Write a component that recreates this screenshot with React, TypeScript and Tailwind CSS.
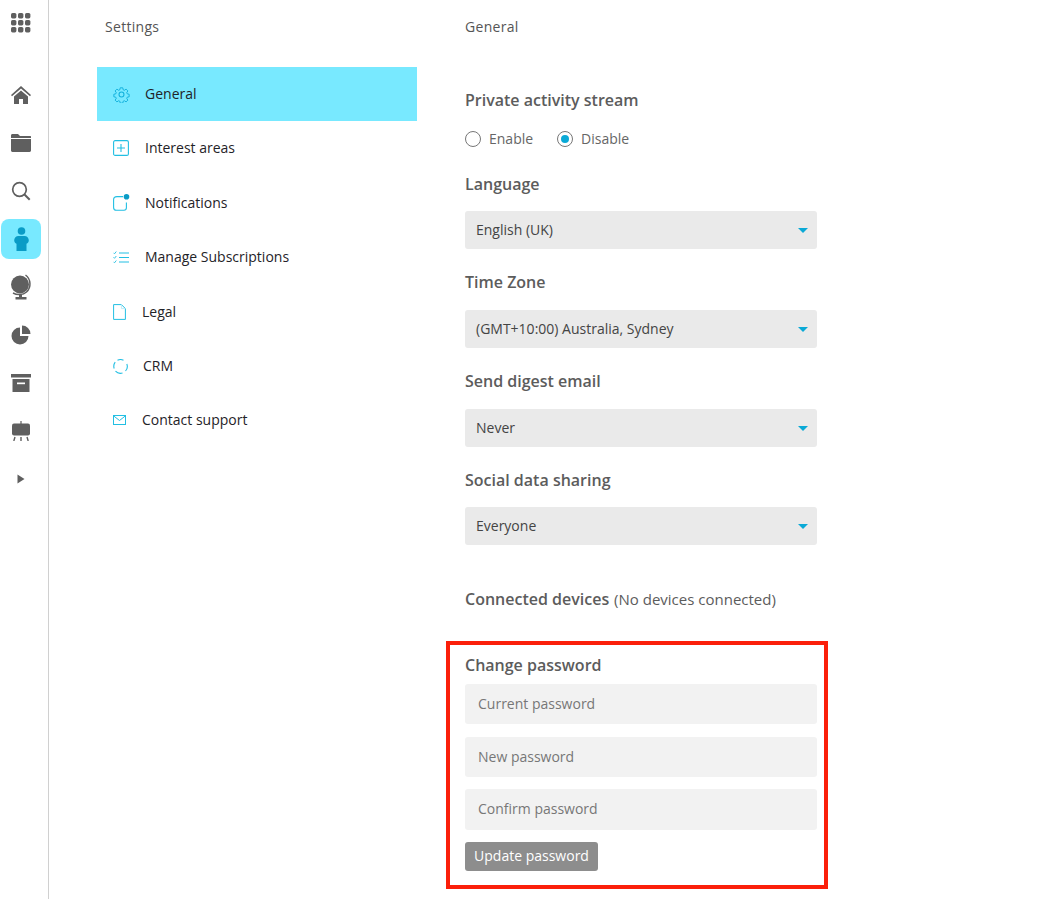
import React from "react";

const g = "#5f5f5f";
const c = "#22bfe3";

function Rail({ children, active }: { children: React.ReactNode; active?: boolean }) {
  return (
    <div className={`w-10 h-10 ml-px mb-2 flex items-center justify-center rounded-[8px] ${active ? "bg-[#78e9ff]" : ""}`}>
      {children}
    </div>
  );
}

function Sidebar() {
  return (
    <aside className="w-[49px] shrink-0 border-r border-[#d0d0d0] min-h-[899px] pt-[3px]">
      <Rail>
        <svg width="22" height="22" viewBox="0 0 22 22" fill={g}>
          {[1, 8, 15].flatMap((y) =>
            [1, 8, 15].map((x) => <rect key={`${x}-${y}`} x={x} y={y} width="5.4" height="5.4" rx="1.6" />)
          )}
        </svg>
      </Rail>
      <div className="h-6" />
      <Rail>
        <svg width="22" height="20" viewBox="0 0 22 20" fill={g}>
          <path d="M11 1 1 10l1 1.2L11 3.4l9 7.8 1-1.2z" />
          <path d="M4 11.4 11 5.4l7 6V19h-5v-5H9v5H4z" />
        </svg>
      </Rail>
      <Rail>
        <svg width="22" height="20" viewBox="0 0 22 20" fill={g}>
          <path d="M1 2.5C1 1.7 1.6 1 2.4 1H8l2 2h10.4c.3 0 .6.3.6.6V5H1z" />
          <path d="M1 6h20v11.6c0 .8-.6 1.4-1.4 1.4H2.4C1.6 19 1 18.4 1 17.6z" />
        </svg>
      </Rail>
      <Rail>
        <svg width="20" height="20" viewBox="0 0 20 20" fill="none" stroke={g} strokeWidth="1.7">
          <circle cx="8.5" cy="8.5" r="6.8" />
          <path d="m13.5 13.5 5.2 5.2" strokeWidth="2" />
        </svg>
      </Rail>
      <Rail active>
        <svg width="15" height="24" viewBox="0 0 15 24" fill="#0a9cc6">
          <circle cx="7.5" cy="4" r="3.8" />
          <path d="M4.500 9h6c2.500 0 4.300 2 4.300 4.300 0 1.700-1 3-2.300 3.400V24h-10v-7.300C1.200 16.300.2 15 .2 13.300.2 11 2 9 4.500 9z" />
        </svg>
      </Rail>
      <Rail>
        <svg width="22" height="26" viewBox="0 0 22 26" fill={g}>
          <circle cx="10" cy="10.500" r="9" />
          <path d="M15.500 1c5.500 4 6 12.500 1 17-3.500 3-9 3.500-13.500 1" fill="none" stroke={g} strokeWidth="1.500" />
          <rect x="9" y="21" width="3" height="2" />
          <rect x="5.500" y="23" width="11" height="2.500" />
        </svg>
      </Rail>
      <Rail>
        <svg width="20" height="20" viewBox="0 0 20 20" fill={g}>
          <path d="M9 2.500V11h8.500A8.500 8.500 0 1 1 9 2.500z" />
          <path d="M11 .5A8.500 8.500 0 0 1 19.500 9H11z" />
        </svg>
      </Rail>
      <Rail>
        <svg width="20" height="18" viewBox="0 0 20 18" fill={g}>
          <rect x="0" y="0" width="20" height="3.500" />
          <path d="M1.500 5h17v13h-17z" />
          <rect x="6" y="8.500" width="8" height="1.700" fill="#ffffff" />
        </svg>
      </Rail>
      <Rail>
        <svg width="20" height="20" viewBox="0 0 20 20" fill={g}>
          <rect x="9.400" y="0" width="1.200" height="3" />
          <rect x="1" y="2.500" width="18" height="12" rx="2" />
          <path d="M4 16 2.800 20M10 16V20M16 16 17.200 20" fill="none" stroke={g} strokeWidth="1.400" />
        </svg>
      </Rail>
      <Rail>
        <svg width="8" height="10" viewBox="0 0 8 10" fill={g}>
          <path d="M.5.500 7.500 5 .5 9.500z" />
        </svg>
      </Rail>
    </aside>
  );
}

const Gear = (
  <svg width="17" height="17" viewBox="0 0 24 24" fill="none" stroke="#12b0dc" strokeWidth="1.500">
    <circle cx="12" cy="12" r="3.500" />
    <path d="M10 1.500h4l.6 3.100 1.900.8 2.700-1.800 2.800 2.800-1.800 2.700.8 1.900 3 .6v4l-3 .6-.8 1.900 1.800 2.700-2.800 2.800-2.700-1.800-1.900.8-.6 3h-4l-.6-3-1.900-.8-2.700 1.800-2.800-2.800 1.800-2.700-.8-1.900-3-.6v-4l3-.6.8-1.900L2 6.400l2.800-2.800 2.700 1.800 1.900-.8z" transform="translate(1.200 1.200) scale(.9)" strokeLinejoin="round" />
  </svg>
);
const Plus = (
  <svg width="16" height="16" viewBox="0 0 16 16" fill="none" stroke={c} strokeWidth="1.100">
    <rect x=".6" y=".6" width="14.800" height="14.800" rx="1.500" />
    <path d="M8 4v8M4 8h8" />
  </svg>
);
const Bell = (
  <svg width="17" height="17" viewBox="0 0 17 17" fill="none" stroke={c} strokeWidth="1.100">
    <path d="M10 2.600H4C2 2.600.6 3.600.6 5.600v7.800c0 1.600 1.200 2.800 2.800 2.800h7.600c1.400 0 2.400-1 2.400-2.400V8.500" />
    <circle cx="13.500" cy="2.800" r="2.800" fill="#0a9cc6" stroke="none" />
  </svg>
);
const Tasks = (
  <svg width="16" height="13" viewBox="0 0 16 13" fill="none" stroke={c} strokeWidth=".9">
    <path d="m.5 1.800 1 1 1.800-2.300M.5 6.300l1 1 1.800-2.300M.5 10.800l1 1 1.800-2.300" />
    <path d="M6 2h10M6 6.500h10M6 11h10" strokeWidth="1" />
  </svg>
);
const Doc = (
  <svg width="13" height="16" viewBox="0 0 13 16" fill="none" stroke={c} strokeWidth="1">
    <path d="M.6.600h7.800l4 4v10.800H.6z" />
    <path d="M8.400.600v4h4" stroke="#bfeaf5" />
  </svg>
);
const Sync = (
  <svg width="15" height="15" viewBox="0 0 15 15" fill="none" stroke={c} strokeWidth="1.100">
    <path d="M4.500 1.300A6.700 6.700 0 0 1 10.500 1.300" />
    <path d="M13.800 5A6.700 6.700 0 0 1 12.500 12" />
    <path d="M9.500 14A6.700 6.700 0 0 1 2.500 12.200" />
    <path d="M1.200 9.500A6.700 6.700 0 0 1 2.200 3.200" />
  </svg>
);
const Mail = (
  <svg width="13" height="10" viewBox="0 0 13 10" fill="none" stroke={c} strokeWidth="1">
    <rect x=".5" y=".5" width="12" height="9" />
    <path d="m.5.800 6 4.700 6-4.700" />
  </svg>
);

const items: { icon: React.ReactNode; label: string; pad: string; h: string; active?: boolean }[] = [
  { icon: Gear, label: "General", pad: "w-[48px]", h: "h-[54px]", active: true },
  { icon: Plus, label: "Interest areas", pad: "w-[48px]", h: "h-[54px]" },
  { icon: Bell, label: "Notifications", pad: "w-[48px]", h: "h-[55px]" },
  { icon: Tasks, label: "Manage Subscriptions", pad: "w-[48px]", h: "h-[54px]" },
  { icon: Doc, label: "Legal", pad: "w-[45px]", h: "h-[55px]" },
  { icon: Sync, label: "CRM", pad: "w-[46px]", h: "h-[54px]" },
  { icon: Mail, label: "Contact support", pad: "w-[45px]", h: "h-[54px]" },
];

function Nav() {
  return (
    <div className="w-[320px] ml-[48px] shrink-0">
      <div className="pl-2 h-[67px] pt-[17px] text-[14px] leading-5 tracking-[0.3px] text-[#555555]">Settings</div>
      {items.map((it) => (
        <div key={it.label} className={`flex items-center ${it.h} ${it.active ? "bg-[#78e9ff]" : ""}`}>
          <div className={`${it.pad} shrink-0 pl-4 flex items-center`}>{it.icon}</div>
          <span className="text-[14px] leading-5 text-[#1f2328]">{it.label}</span>
        </div>
      ))}
    </div>
  );
}

function Heading({ children, className = "" }: { children: React.ReactNode; className?: string }) {
  return <div className={`text-[16px] leading-6 font-semibold text-[#5c5c5c] ${className}`}>{children}</div>;
}

function Select({ value, className = "" }: { value: string; className?: string }) {
  return (
    <div className={`h-[38px] rounded-[3px] bg-[#eaeaea] flex items-center justify-between pl-[11px] pr-[9px] text-[14px] text-[#444444] ${className}`}>
      <span className="pb-[2px]">{value}</span>
      <span className="w-0 h-0 border-x-[5px] border-x-transparent border-t-[5px] border-t-[#0aa9d6]" />
    </div>
  );
}

function Field({ placeholder, className = "" }: { placeholder: string; className?: string }) {
  return (
    <div className={`rounded-[3px] bg-[#f2f2f2] flex items-center pl-[13px] pb-[2px] text-[14px] text-[#777777] ${className}`}>
      {placeholder}
    </div>
  );
}

function Radio({ label, checked }: { label: string; checked?: boolean }) {
  return (
    <div className="flex items-center gap-2 text-[14px] text-[#666666]">
      <span className="w-4 h-4 rounded-full border border-[#777777] flex items-center justify-center">
        {checked && <span className="w-2 h-2 rounded-full bg-[#0aa9d6]" />}
      </span>
      <span className="pb-[2px]">{label}</span>
    </div>
  );
}

function General() {
  return (
    <div className="w-[352px] ml-[48px] shrink-0">
      <div className="h-[20px] mt-[17px] text-[14px] leading-5 tracking-[0.3px] text-[#555555]">General</div>
      <Heading className="mt-[51px]">Private activity stream</Heading>
      <div className="flex gap-6 mt-[17px] h-[20px] items-center">
        <Radio label="Enable" />
        <Radio label="Disable" checked />
      </div>
      <Heading className="mt-[23px]">Language</Heading>
      <Select value="English (UK)" className="mt-[15px]" />
      <Heading className="mt-[21px]">Time Zone</Heading>
      <Select value="(GMT+10:00) Australia, Sydney" className="mt-[16px]" />
      <Heading className="mt-[21px]">Send digest email</Heading>
      <Select value="Never" className="mt-[16px]" />
      <Heading className="mt-[21px]">Social data sharing</Heading>
      <Select value="Everyone" className="mt-[15px]" />
      <div className="mt-[42px] text-[15px] leading-6 text-[#5c5c5c]">
        <span className="text-[16px] font-semibold mr-px">Connected devices</span> (No devices connected)
      </div>
      <div className="relative mt-[42px]">
        <div className="absolute -left-[19px] -right-[11px] -top-[12px] h-[248px] border-4 border-[#fb1f0a] pointer-events-none" />
        <Heading>Change password</Heading>
        <Field placeholder="Current password" className="mt-[7px] h-10" />
        <Field placeholder="New password" className="mt-[13px] h-10" />
        <Field placeholder="Confirm password" className="mt-[12px] h-[41px]" />
        <button className="block mt-[12px] h-[29px] w-[133px] pb-[2px] rounded-[3px] bg-[#8d8d8d] text-[14px] text-white">
          Update password
        </button>
      </div>
    </div>
  );
}

export default function App() {
  return (
    <div className="flex min-h-[899px] h-[899px] overflow-hidden bg-white font-['Open_Sans',sans-serif]">
      <Sidebar />
      <Nav />
      <General />
    </div>
  );
}
